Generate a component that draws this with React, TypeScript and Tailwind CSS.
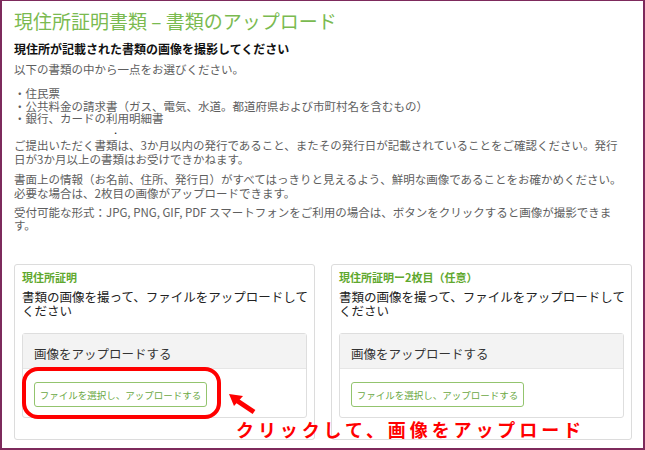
const jp = { fontFamily: '"Noto Sans CJK JP", "Noto Sans", sans-serif' };

function UploadCard({ title }: { title: string }) {
  return (
    <div className="w-[301px] h-[176px] rounded-[3px] border border-[#dcdcdc] bg-white px-[7px] pt-[5px]">
      <p className="text-[11px] leading-[14px] font-bold text-[#5fa82e]">{title}</p>
      <p className="mt-[6px] text-[12.5px] leading-[14px] text-[#222] whitespace-nowrap">
        書類の画像を撮って、ファイルをアップロードして
        <br />
        ください
      </p>
      <div className="mt-[15px] rounded-[3px] border border-[#dedede]">
        <div className="bg-[#f3f3f3] border-b border-[#e6e6e6] pl-[11px] pt-[13px] pb-[7px] text-[12.5px] leading-[14px] text-[#333]">
          画像をアップロードする
        </div>
        <div className="px-[11px] pt-[11px] pb-[10px]">
          <button className="w-[173px] h-[25px] rounded-[3px] border border-[#93c46e] bg-white text-[9.5px] text-[#6aa843]">
            ファイルを選択し、アップロードする
          </button>
        </div>
      </div>
    </div>
  );
}

export default function App() {
  return (
    <div
      style={jp}
      className="relative w-[645px] h-[450px] overflow-hidden bg-white border-t border-l-2 border-r-2 border-b-2 border-[#7d2a5c]"
    >
      <div className="pl-[12px] pt-[8px]">
        {/* header */}
        <h1 className="text-[19px] leading-[24px] text-[#7aba50]">
          現住所証明書類 – 書類のアップロード
        </h1>
        <h2 className="mt-[8px] text-[12px] leading-[15px] font-bold text-[#111]">
          現住所が記載された書類の画像を撮影してください
        </h2>

        <div className="text-[11.5px] text-[#5e5e5e]">
          <p className="mt-[6px] leading-[14px]">以下の書類の中から一点をお選びください。</p>
          <div className="mt-[11px] leading-[12.5px]">
            <p>・住民票</p>
            <p>・公共料金の請求書（ガス、電気、水道。都道府県および市町村名を含むもの）</p>
            <p>・銀行、カードの利用明細書</p>
            <p className="pl-[100px] leading-[8px] text-[#222]">.</p>
          </div>
          <p className="mt-[5px] leading-[14px] whitespace-nowrap">
            ご提出いただく書類は、3か月以内の発行であること、またその発行日が記載されていることをご確認ください。発行
            <br />
            日が3か月以上の書類はお受けできかねます。
          </p>
          <p className="mt-[6px] leading-[14px] whitespace-nowrap">
            書面上の情報（お名前、住所、発行日）がすべてはっきりと見えるよう、鮮明な画像であることをお確かめください。
            <br />
            必要な場合は、2枚目の画像がアップロードできます。
          </p>
          <p className="mt-[6px] leading-[13px] whitespace-nowrap">
            受付可能な形式：JPG, PNG, GIF, PDF スマートフォンをご利用の場合は、ボタンをクリックすると画像が撮影できま
            <br />
            す。
          </p>
        </div>

        {/* cards */}
        <div className="mt-[32px] flex gap-[16px]">
          <UploadCard title="現住所証明" />
          <UploadCard title="現住所証明ー2枚目（任意）" />
        </div>
      </div>

      {/* annotation */}
      <div className="absolute left-[20px] top-[366px] w-[199px] h-[52px] rounded-[16px] border-4 border-[#ff0000]" />
      <svg className="absolute left-[224px] top-[390px]" width="34" height="26" viewBox="0 0 34 26">
        <line x1="28" y1="21" x2="10" y2="9" stroke="#ff0000" strokeWidth="5" />
        <polygon points="3,3 17,5 8,15" fill="#ff0000" />
      </svg>
      <p className="absolute left-[234px] top-[417px] text-[18px] leading-[22px] font-bold tracking-[3.9px] text-[#ff0000] whitespace-nowrap">
        クリックして、画像をアップロード
      </p>
    </div>
  );
}
